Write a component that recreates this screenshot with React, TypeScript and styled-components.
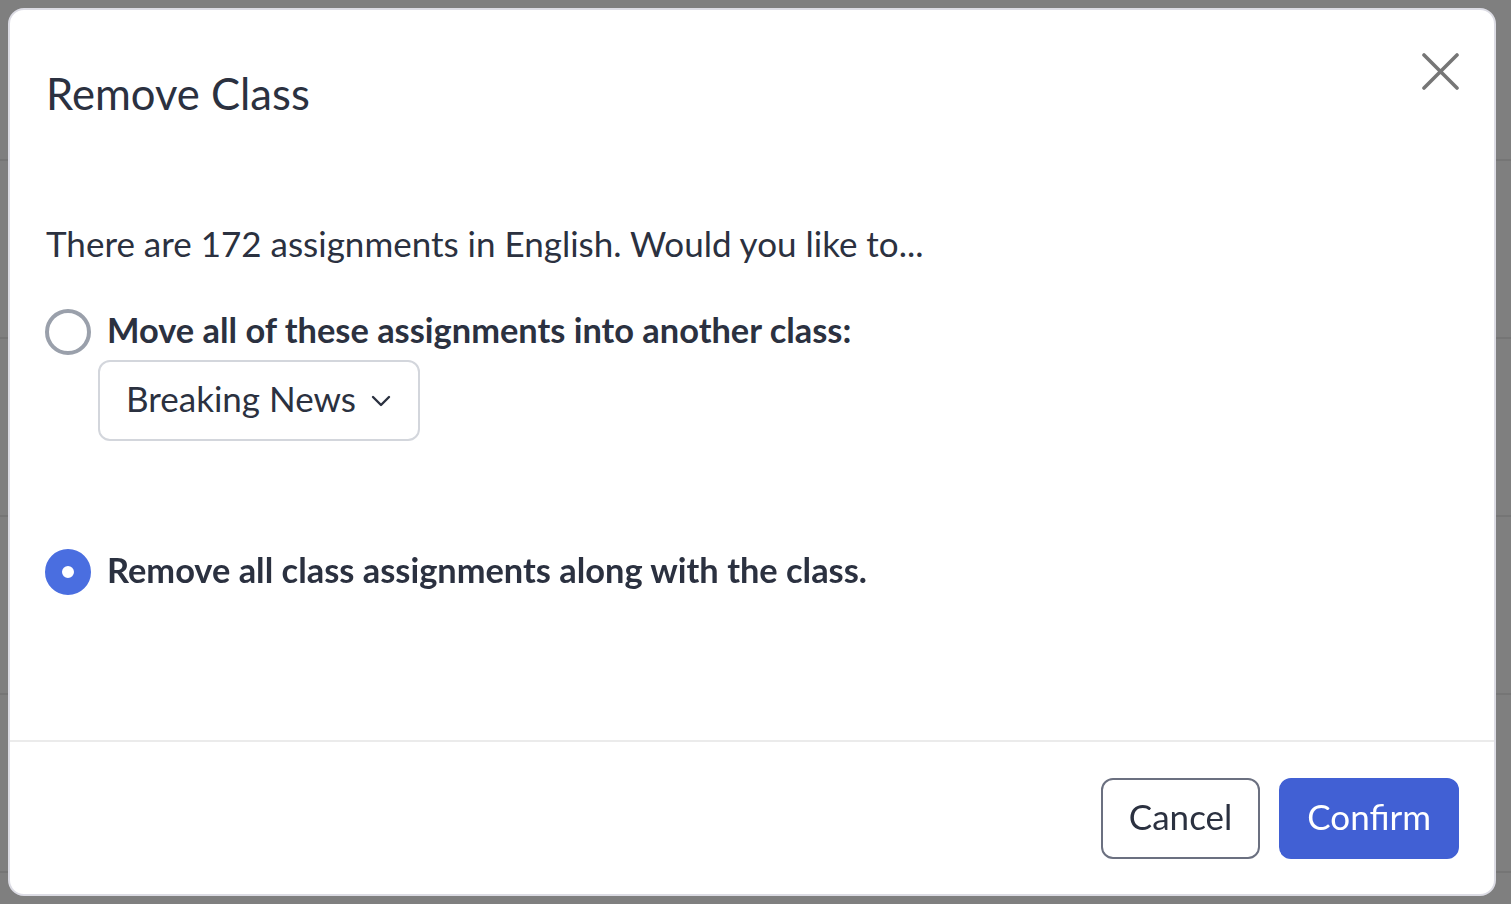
import React, { useState } from "react";
import styled, { createGlobalStyle } from "styled-components";

const GlobalStyle = createGlobalStyle`
  * { box-sizing: border-box; }
  html, body { margin: 0; padding: 0; }
  body {
    font-family: Lato, "Open Sans", "Liberation Sans", sans-serif;
    background: #fff;
    overflow: hidden;
  }
`;

const backRows = [0, 1, 2, 3, 4];

function App() {
  const [choice, setChoice] = useState<"move" | "remove">("remove");

  return (
    <>
      <GlobalStyle />
      <Page>
        {backRows.map((r) => (
          <BackRow key={r} />
        ))}
      </Page>

      <Overlay>
        <Modal role="dialog" aria-labelledby="remove-class-title">
          <CloseButton type="button" aria-label="Close">
            <svg width="37" height="37" viewBox="0 0 37 37" fill="none">
              <path
                d="M2 2L35 35M35 2L2 35"
                stroke="#767676"
                strokeWidth="3.6"
                strokeLinecap="round"
              />
            </svg>
          </CloseButton>

          <Body>
            <Title id="remove-class-title">Remove Class</Title>
            <Intro>There are 172 assignments in English. Would you like to...</Intro>

            <Option onClick={() => setChoice("move")}>
              <Radio checked={choice === "move"} />
              <OptionLabel>Move all of these assignments into another class:</OptionLabel>
            </Option>
            <Select type="button">
              Breaking News
              <svg width="20" height="12" viewBox="0 0 20 12" fill="none">
                <path
                  d="M2 2L10 10L18 2"
                  stroke="#2b3140"
                  strokeWidth="2.4"
                  strokeLinecap="round"
                  strokeLinejoin="round"
                />
              </svg>
            </Select>

            <Option spaced onClick={() => setChoice("remove")}>
              <Radio checked={choice === "remove"} />
              <OptionLabel>Remove all class assignments along with the class.</OptionLabel>
            </Option>
          </Body>

          <Footer>
            <Button type="button">Cancel</Button>
            <Button type="button" primary>
              Confirm
            </Button>
          </Footer>
        </Modal>
      </Overlay>
    </>
  );
}

export default App;

const Page = styled.div`
  display: flex;
  flex-direction: column;
  height: 904px;
  overflow: hidden;
`;

const BackRow = styled.div`
  flex: none;
  height: 178px;
  border-bottom: 2px solid #ebebeb;

  &:first-child {
    height: 161px;
  }
`;

const Overlay = styled.div`
  position: fixed;
  inset: 0;
  background: rgba(0, 0, 0, 0.5);
  display: flex;
  padding: 8px 15px 8px 8px;
`;

const Modal = styled.div`
  position: relative;
  flex: 1;
  display: flex;
  flex-direction: column;
  background: #fff;
  border: 2px solid #dcdce4;
  border-radius: 16px;
  color: #2b3140;
`;

const CloseButton = styled.button`
  position: absolute;
  top: 43px;
  right: 35px;
  width: 37px;
  height: 37px;
  padding: 0;
  border: 0;
  background: none;
  cursor: pointer;
  display: flex;
`;

const Body = styled.div`
  flex: 1;
  padding: 58px 36px 0;
`;

const Title = styled.h1`
  margin: 0;
  font-size: 43.6px;
  font-weight: 400;
  line-height: 50px;
  color: #2b3140;
`;

const Intro = styled.p`
  margin: 104px 0 0;
  font-size: 35px;
  line-height: 42px;
`;

const Option = styled.label<{ spaced?: boolean }>`
  display: flex;
  align-items: center;
  gap: 16px;
  margin-top: ${(p) => (p.spaced ? "108px" : "45px")};
  cursor: pointer;
`;

const Radio = styled.span<{ checked: boolean }>`
  flex: none;
  width: 46px;
  height: 46px;
  border-radius: 50%;
  margin-left: -1px;
  border: ${(p) => (p.checked ? "17px solid #4a6ee0" : "4px solid #9aa0ab")};
  background: #fff;
`;

const OptionLabel = styled.span`
  font-size: 34.4px;
  font-weight: 700;
  line-height: 42px;
  padding-bottom: 4px;
  color: #2b3140;
`;

const Select = styled.button`
  display: flex;
  align-items: center;
  gap: 15px;
  height: 81px;
  margin: 5px 0 0 52px;
  padding: 0 27px 5px 26px;
  border: 2px solid #d3d6dc;
  border-radius: 12px;
  background: #fff;
  font-family: inherit;
  font-size: 35px;
  color: #2b3140;
  cursor: pointer;

  svg {
    margin-top: 5px;
  }
`;

const Footer = styled.div`
  display: flex;
  justify-content: flex-end;
  gap: 19px;
  padding: 36px 35px 35px;
  border-top: 2px solid #ebebeb;
`;

const Button = styled.button<{ primary?: boolean }>`
  height: 81px;
  padding: 0 26px 6px;
  border-radius: 12px;
  border: 2px solid ${(p) => (p.primary ? "#4160d4" : "#6b7080")};
  background: ${(p) => (p.primary ? "#4160d4" : "#fff")};
  color: ${(p) => (p.primary ? "#fff" : "#2b3140")};
  font-family: inherit;
  font-size: 35px;
  cursor: pointer;
`;
